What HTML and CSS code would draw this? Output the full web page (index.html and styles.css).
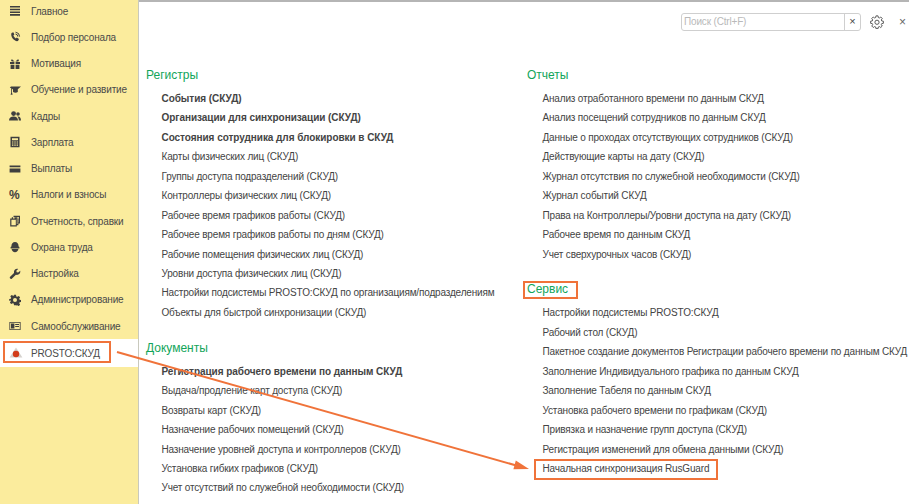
FILE: index.html
```html
<!DOCTYPE html>
<html lang="ru">
<head>
<meta charset="utf-8">
<title>PROSTO:СКУД</title>
<link rel="stylesheet" href="styles.css">
</head>
<body>
<div class="app">
  <nav class="side">
    <div class="nav-item"><svg class="ico" viewBox="0 0 12 12"><path d="M1 1h10v1.6H1zM1 3.7h10v1.6H1zM1 6.4h10V8H1zM1 9.1h10v1.6H1z"/></svg><span>Главное</span></div>
    <div class="nav-item"><svg class="ico" viewBox="0 0 12 12"><path d="M2.5 2 4.3 1.2 5.4 3.6 4.4 4.6C4.8 5.8 5.6 6.8 6.8 7.4L7.8 6.5 10 8 9 10C6 11 1 6 2.5 2z"/><path class="ln" d="M6.5 1.2A4.5 4.5 0 0 1 10.6 5.6M6.5 3A2.6 2.6 0 0 1 8.8 5.6"/></svg><span>Подбор персонала</span></div>
    <div class="nav-item"><svg class="ico" viewBox="0 0 12 12"><path d="M1 4h4.4v2H1zM6.6 4H11v2H6.6zM1.6 6.8h3.8V11H1.6zM6.6 6.8h3.8V11H6.6zM3 1.2 5.6 3.4H3C1.8 3 1.8 1.6 3 1.2zM9 1.2 6.4 3.4H9C10.2 3 10.2 1.6 9 1.2z"/></svg><span>Мотивация</span></div>
    <div class="nav-item"><svg class="ico" viewBox="0 0 12 12"><path d="M2 2.4h10L8.8 5.2V8C7.5 9 5.5 9 4 8V5.4L3 4.7V8.5L3.6 10.8H1.6L2.2 8.5V4.2L.8 3.4z"/></svg><span>Обучение и развитие</span></div>
    <div class="nav-item"><svg class="ico" viewBox="0 0 12 12"><circle cx="4.6" cy="3.6" r="2.4"/><circle cx="9" cy="4" r="1.8"/><path d="M0 10.5C0 7.8 2 6.6 4.6 6.6S9 7.8 9 10.5zM9.8 10.5C9.8 8.8 9.3 7.5 8.4 6.6 10.4 6.2 12 7.4 12 10.5z"/></svg><span>Кадры</span></div>
    <div class="nav-item"><svg class="ico" viewBox="0 0 12 12"><path fill-rule="evenodd" d="M1.5.8h9v10.4h-9zM3 2.2v2h6v-2zM3 5.4v1.2h1.4V5.4zM5.3 5.4v1.2h1.4V5.4zM7.6 5.4v1.2H9V5.4zM3 7.4v1.2h1.4V7.4zM5.3 7.4v1.2h1.4V7.4zM7.6 7.4v1.2H9V7.4zM3 9.2v.9h1.4v-.9zM5.3 9.2v.9h1.4v-.9zM7.6 9.2v.9H9v-.9z"/></svg><span>Зарплата</span></div>
    <div class="nav-item"><svg class="ico" viewBox="0 0 12 12"><path d="M.6 2.5h10.8v1.8H.6zM.6 5.4h10.8v4.1H.6z"/></svg><span>Выплаты</span></div>
    <div class="nav-item"><span class="pct ico">%</span><span>Налоги и взносы</span></div>
    <div class="nav-item"><svg class="ico" viewBox="0 0 12 12"><path fill-rule="evenodd" d="M4.5.8H11V8.6H9.4V10.2H7.8V11.4H1.2V3.6H2.8V2.2H4.5zM2.4 4.8V10.2H6.8V4.8zM4 3.6H7.8V9H8.4V2.2H4zM5.6 2H9.8V7.6H9.4V3.6H5.6z"/></svg><span>Отчетность, справки</span></div>
    <div class="nav-item"><svg class="ico" viewBox="0 0 12 12"><path d="M2.4 5.4C2.4 2.8 3.8 1 6 1S9.6 2.8 9.6 5.4L10.4 6V7.4H1.6V6zM2.6 8.1H9.4C9.2 10 7.8 11.2 6 11.2S2.8 10 2.6 8.1z"/></svg><span>Охрана труда</span></div>
    <div class="nav-item"><svg class="ico" viewBox="0 0 12 12"><path d="M11.3 2.8 9.2 4.6 7.7 4.2 7.3 2.8 9.2.9C7.4.2 5.2 1.2 5 3.6L5 5 .9 9C.2 10 1.8 11.6 2.8 10.8L6.9 6.8C9.6 7.3 11.8 5.4 11.3 2.8z"/></svg><span>Настройка</span></div>
    <div class="nav-item"><svg class="ico" viewBox="0 0 12 12"><path fill-rule="evenodd" d="M5 .8h2l.3 1.6 1 .4 1.4-.9 1.4 1.4-.9 1.4.4 1 1.6.3v2l-1.6.3-.4 1 .9 1.4-1.4 1.4-1.4-.9-1 .4L7 11.2H5l-.3-1.6-1-.4-1.4.9-1.4-1.4.9-1.4-.4-1L.2 7V5l1.6-.3.4-1-.9-1.4 1.4-1.4 1.4.9 1-.4zM6 4a2 2 0 1 0 0 4 2 2 0 0 0 0-4z"/></svg><span>Администрирование</span></div>
    <div class="nav-item"><svg class="ico" viewBox="0 0 12 12"><path fill-rule="evenodd" d="M.4 2h11.2v8H.4zM1.2 2.8v6.4h9.6V2.8zM2 3.6h3.4v4.8H2zM6.2 4H10v1H6.2zM6.2 6H10v1H6.2z"/></svg><span>Самообслуживание</span></div>
    <div class="nav-item active"><svg class="ico" viewBox="0 0 14 12"><path fill="#d5d2ce" d="M7 .6 13.4 10.6H.6z"/><circle cx="7" cy="7" r="3.2" fill="#d23c1a"/></svg><span>PROSTO:СКУД</span></div>
  </nav>

  <main class="main">
    <div class="toolbar">
      <div class="search"><span class="search-text">Поиск (Ctrl+F)</span><span class="search-clear">×</span></div>
      <svg class="gear" viewBox="0 0 16 16"><path d="M6.8 1h2.4l.3 1.9 1.2.5 1.6-1.1 1.7 1.7-1.1 1.6.5 1.2 1.9.3v2.4l-1.9.3-.5 1.2 1.1 1.6-1.7 1.7-1.6-1.1-1.2.5-.3 1.9H6.8l-.3-1.9-1.2-.5-1.6 1.1L2 12.6l1.1-1.6-.5-1.2-1.9-.3V7.1l1.9-.3.5-1.2L2 4l1.7-1.7 1.6 1.1 1.2-.5z"/><circle cx="8" cy="8.3" r="2.4"/></svg>
      <span class="close">×</span>
    </div>
    <div class="cols">
      <div class="col col-left">
        <section class="sec">
          <h2 class="first">Регистры</h2>
          <a class="b">События (СКУД)</a>
          <a class="b">Организации для синхронизации (СКУД)</a>
          <a class="b">Состояния сотрудника для блокировки в СКУД</a>
          <a>Карты физических лиц (СКУД)</a>
          <a>Группы доступа подразделений (СКУД)</a>
          <a>Контроллеры физических лиц (СКУД)</a>
          <a>Рабочее время графиков работы (СКУД)</a>
          <a>Рабочее время графиков работы по дням (СКУД)</a>
          <a>Рабочие помещения физических лиц (СКУД)</a>
          <a>Уровни доступа физических лиц (СКУД)</a>
          <a>Настройки подсистемы PROSTO:СКУД по организациям/подразделениям</a>
          <a>Объекты для быстрой синхронизации (СКУД)</a>
        </section>
        <section class="sec">
          <h2>Документы</h2>
          <a class="b">Регистрация рабочего времени по данным СКУД</a>
          <a>Выдача/продление карт доступа (СКУД)</a>
          <a>Возвраты карт (СКУД)</a>
          <a>Назначение рабочих помещений (СКУД)</a>
          <a>Назначение уровней доступа и контроллеров (СКУД)</a>
          <a>Установка гибких графиков (СКУД)</a>
          <a>Учет отсутствий по служебной необходимости (СКУД)</a>
        </section>
      </div>
      <div class="col col-right">
        <section class="sec">
          <h2 class="first">Отчеты</h2>
          <a>Анализ отработанного времени по данным СКУД</a>
          <a>Анализ посещений сотрудников по данным СКУД</a>
          <a>Данные о проходах отсутствующих сотрудников (СКУД)</a>
          <a>Действующие карты на дату (СКУД)</a>
          <a>Журнал отсутствия по служебной необходимости (СКУД)</a>
          <a>Журнал событий СКУД</a>
          <a>Права на Контроллеры/Уровни доступа на дату (СКУД)</a>
          <a>Рабочее время по данным СКУД</a>
          <a>Учет сверхурочных часов (СКУД)</a>
        </section>
        <section class="sec">
          <h2>Сервис</h2>
          <a>Настройки подсистемы PROSTO:СКУД</a>
          <a>Рабочий стол (СКУД)</a>
          <a>Пакетное создание документов Регистрации рабочего времени по данным СКУД</a>
          <a>Заполнение Индивидуального графика по данным СКУД</a>
          <a>Заполнение Табеля по данным СКУД</a>
          <a>Установка рабочего времени по графикам (СКУД)</a>
          <a>Привязка и назначение групп доступа (СКУД)</a>
          <a>Регистрация изменений для обмена данными (СКУД)</a>
          <a>Начальная синхронизация RusGuard</a>
        </section>
      </div>
    </div>
  </main>

  <div class="mark mark-nav"></div>
  <div class="mark mark-head"></div>
  <div class="mark mark-item"></div>
  <svg class="arrow" viewBox="0 0 909 504"><path d="M117 352 518 466" stroke="#f0733a" stroke-width="2" fill="none"/><path d="M529 469 515.8 460.6 513.4 469.2z" fill="#f0733a"/></svg>
</div>
</body>
</html>
```
FILE: styles.css
```css
* { box-sizing: border-box; }
html, body { margin: 0; height: 100%; overflow: hidden; background: #fff; }
.app {
  position: relative;
  display: flex;
  width: 909px;
  height: 504px;
  overflow: hidden;
  font-family: "Liberation Sans", Arial, sans-serif;
  font-size: 10px;
  letter-spacing: -0.17px;
  color: #444;
}
.side {
  flex: 0 0 139px;
  margin-top: -2px;
  height: 506px;
  background: #fbec9d;
  border-right: 1px solid #c9c9bd;
}
.nav-item {
  display: flex;
  align-items: center;
  gap: 10px;
  height: 26.25px;
  padding-left: 9px;
  color: #4a4a4a;
}
.nav-item.active { background: #fff; height: 28px; }
.ico { flex: 0 0 12px; width: 12px; height: 12px; fill: #3f3f3f; }
.nav-item.active .ico { flex-basis: 14px; width: 14px; margin-right: -2px; }
.ln { fill: none; stroke: #3f3f3f; stroke-width: 1; }
.pct { font-size: 12px; font-weight: bold; line-height: 12px; letter-spacing: 0; color: #3f3f3f; }
.main { flex: 1; min-width: 0; border-top: 2px solid #b5b5b5; }
.toolbar {
  display: flex;
  align-items: center;
  height: 40px;
  padding-left: 542px;
}
.search {
  display: flex;
  width: 180px;
  height: 18px;
  border: 1px solid #cfcfcf;
  border-radius: 3px;
  margin-top: -1px;
}
.search-text { flex: 1; padding-left: 2px; line-height: 16px; color: #b9b9b9; }
.search-clear { width: 16px; border-left: 1px solid #cfcfcf; text-align: center; line-height: 15px; font-size: 11px; }
.gear { width: 14px; height: 14px; margin-left: 9px; fill: none; stroke: #555; stroke-width: 1.1; }
.close { margin-left: 15px; font-size: 12px; color: #666; }
.cols { display: flex; padding: 22.5px 0 0 7px; }
.col { display: flex; flex-direction: column; gap: 15.5px; }
.col-left { flex: 0 0 381px; }
.col-right { flex: 1; min-width: 0; }
.sec { display: flex; flex-direction: column; }
.sec h2 {
  margin: 0 0 4px;
  height: 20px;
  line-height: 20px;
  font-size: 12px;
  letter-spacing: 0;
  font-weight: normal;
  color: #12a55a;
}
.sec h2.first { margin-bottom: 4.5px; }
.sec a {
  display: block;
  height: 19.45px;
  line-height: 19.45px;
  padding-left: 15.5px;
  white-space: nowrap;
}
.sec a.b { font-weight: bold; letter-spacing: -0.05px; }
.mark { position: absolute; border: 2px solid #f0733a; }
.mark-nav { left: 3px; top: 341px; width: 108px; height: 22px; }
.mark-head { left: 523px; top: 281px; width: 55px; height: 18px; }
.mark-item { left: 534px; top: 459px; width: 184px; height: 21px; }
.arrow { position: absolute; left: 0; top: 0; width: 909px; height: 504px; pointer-events: none; }
```
